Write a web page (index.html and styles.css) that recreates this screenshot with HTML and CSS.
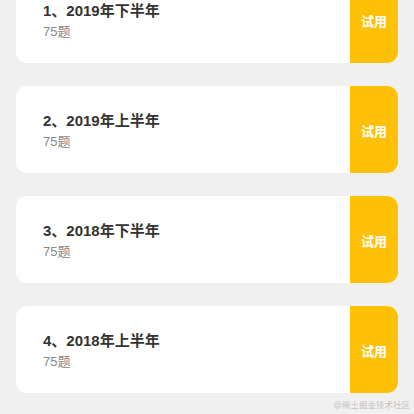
FILE: index.html
```html
<!DOCTYPE html>
<html lang="zh-CN">
<head>
<meta charset="utf-8">
<title>试卷列表</title>
<link rel="stylesheet" href="styles.css">
</head>
<body>
<div class="list">
  <div class="card">
    <div class="info">
      <div class="title">1、2019年下半年</div>
      <div class="sub">75题</div>
    </div>
    <div class="btn">试用</div>
  </div>
  <div class="card">
    <div class="info">
      <div class="title">2、2019年上半年</div>
      <div class="sub">75题</div>
    </div>
    <div class="btn">试用</div>
  </div>
  <div class="card">
    <div class="info">
      <div class="title">3、2018年下半年</div>
      <div class="sub">75题</div>
    </div>
    <div class="btn">试用</div>
  </div>
  <div class="card">
    <div class="info">
      <div class="title">4、2018年上半年</div>
      <div class="sub">75题</div>
    </div>
    <div class="btn">试用</div>
  </div>
</div>
<div class="watermark">@稀土掘金技术社区</div>
</body>
</html>
```
FILE: styles.css
```css
html, body {
  margin: 0;
  padding: 0;
}
body {
  background: #f0f0f0;
  font-family: "Liberation Sans", "Noto Sans CJK SC", sans-serif;
  width: 414px;
  height: 414px;
  overflow: hidden;
  position: relative;
}
.list {
  display: flex;
  flex-direction: column;
  gap: 23px;
  padding: 0 16px;
  margin-top: -24px;
}
.card {
  display: flex;
  height: 87px;
  background: #ffffff;
  border-radius: 11px;
  overflow: hidden;
}
.info {
  flex: 1;
  padding: 25px 0 0 27px;
  box-sizing: border-box;
}
.title {
  font-size: 15px;
  line-height: 20px;
  font-weight: bold;
  color: #333333;
}
.sub {
  margin-top: 2px;
  font-size: 13px;
  line-height: 18px;
  color: #888888;
}
.btn {
  width: 48px;
  background: #ffc107;
  color: #ffffff;
  font-size: 13px;
  font-weight: bold;
  display: flex;
  align-items: center;
  justify-content: center;
  padding-top: 2px;
  box-sizing: border-box;
}
.watermark {
  position: absolute;
  right: 4px;
  bottom: 3px;
  font-size: 8.5px;
  line-height: 12px;
  color: #c4c4c4;
}
```
